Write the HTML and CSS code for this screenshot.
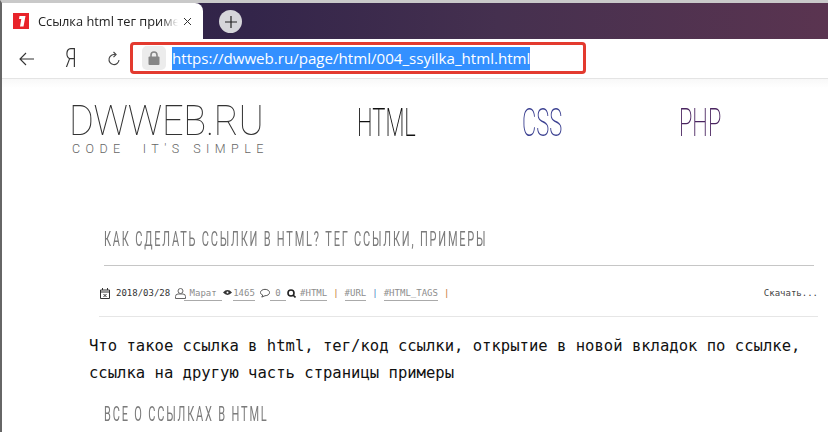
FILE: index.html
```html
<!DOCTYPE html>
<html lang="ru">
<head>
<meta charset="utf-8">
<title>Ссылка html тег примеры</title>
<link rel="stylesheet" href="styles.css">
</head>
<body>
<div class="window">
  <div class="tabbar">
    <div class="tab">
      <svg class="favicon" width="16" height="16" viewBox="0 0 16 16"><rect width="16" height="16" fill="#e8232a"/><path d="M6.500 3h6L10.500 13.500H7L8.300 6H6z" fill="#fff"/></svg>
      <span class="tab-title">Ссылка html тег примеры</span>
      <svg class="tab-close" width="9" height="9" viewBox="0 0 9 9"><path d="M1 1l7 7M8 1l-7 7" stroke="#333" stroke-width="1" fill="none"/></svg>
    </div>
    <div class="new-tab"><svg width="12" height="12" viewBox="0 0 12 12"><path d="M6 0v12M0 6h12" stroke="#222" stroke-width="1.200"/></svg></div>
  </div>
  <div class="toolbar">
    <svg class="ic-back" width="15" height="14" viewBox="0 0 15 14"><path d="M15 7H1M7 1L1 7l6 6" stroke="#333" stroke-width="1.100" fill="none"/></svg>
    <span class="ya">Я</span>
    <svg class="ic-reload" width="14" height="16" viewBox="0 0 14 16"><path d="M8.500 3.800A5 5 0 1 0 12 9" stroke="#444" stroke-width="1.100" fill="none"/><path d="M6.500 1l2.600 2.600L6.500 6.200" stroke="#444" stroke-width="1.100" fill="none"/></svg>
    <div class="address">
      <div class="lock"><svg width="12" height="14" viewBox="0 0 12 14"><path d="M3 6V4a3 3 0 0 1 6 0v2" stroke="#858585" stroke-width="1.600" fill="none"/><rect x="0.500" y="5.500" width="11" height="8.500" rx="1" fill="#858585"/></svg></div>
      <span class="url">https://dwweb.ru/page/html/004_ssyilka_html.html</span>
    </div>
  </div>
  <main class="page">
    <header class="site-head">
      <div class="logo">
        <div class="logo-main">DWWEB.RU</div>
        <div class="logo-sub">CODE&nbsp; IT'S SIMPLE</div>
      </div>
      <nav class="nav">
        <a class="nav-html">HTML</a>
        <a class="nav-css">CSS</a>
        <a class="nav-php">PHP</a>
      </nav>
    </header>
    <article class="article">
      <h1 class="title"><span>КАК СДЕЛАТЬ ССЫЛКИ В HTML? ТЕГ ССЫЛКИ, ПРИМЕРЫ</span></h1>
      <div class="meta">
        <svg class="m-ic" width="10" height="11" viewBox="0 0 10 11"><path d="M.5 2h9v8.500h-9zM.5 4h9M2.500 0v2M7.500 0v2" stroke="#333" fill="none"/><path d="M3.500 6l3 3M6.500 6l-3 3" stroke="#333"/></svg>
        <span class="date">2018/03/28</span>
        <svg class="m-user" width="11" height="11" viewBox="0 0 11 11"><circle cx="5.500" cy="3" r="2.500" stroke="#666" fill="none"/><path d="M.5 10.500V8.500a2.500 2.500 0 0 1 2.500-2.500h5a2.500 2.500 0 0 1 2.500 2.500v2z" stroke="#666" fill="none"/></svg>
        <a class="m-link author">&nbsp;Марат&nbsp;</a>
        <svg class="m-eye" width="9" height="7" viewBox="0 0 11 8"><path d="M0 4q5.500-6 11 0q-5.500 6-11 0z" fill="#333"/><circle cx="5.500" cy="4" r="1.200" fill="#fff"/></svg>
        <a class="m-link views">1465</a>
        <svg class="m-bubble" width="10" height="10" viewBox="0 0 11 10"><path d="M5.500 1c2.800 0 5 1.500 5 3.500S8.300 8 5.500 8L2 9.500l1-2.200C1.500 6.700.5 5.700.5 4.500.5 2.500 2.700 1 5.500 1z" stroke="#444" fill="none"/></svg>
        <a class="m-link comments">&nbsp;0&nbsp;</a>
        <svg class="m-search" width="9" height="9" viewBox="0 0 9 9"><circle cx="4" cy="4" r="3" stroke="#222" stroke-width="1.600" fill="none"/><path d="M6 6l2.500 2.500" stroke="#222" stroke-width="1.600"/></svg>
        <a class="m-link tag">#HTML</a><span class="sep">|</span>
        <a class="m-link tag">#URL</a><span class="sep sep-blue">|</span>
        <a class="m-link tag">#HTML_TAGS</a><span class="sep">|</span>
        <span class="download">Скачать...</span>
      </div>
      <p class="lead">Что такое ссылка в html, тег/код ссылки, открытие в новой вкладок по ссылке, ссылка на другую часть страницы примеры</p>
      <h2 class="subtitle"><span>ВСЕ О ССЫЛКАХ В HTML</span></h2>
    </article>
  </main>
</div>
</body>
</html>
```
FILE: styles.css
```css
* { box-sizing: border-box; }
html, body { margin: 0; padding: 0; height: 432px; overflow: hidden; background: #fff; }
.window { width: 828px; height: 432px; overflow: hidden; display: flex; flex-direction: column; border-top: 3px solid #c9c9c9; border-left: 2px solid #666; }

.tabbar { height: 36px; flex: none; display: flex; align-items: flex-start; background: linear-gradient(90deg, #2e2343 0%, #33254a 30%, #45304f 60%, #5a3450 100%); }
.tab { width: 201px; height: 36px; background: #fff; border-radius: 0 8px 0 0; display: flex; align-items: center; padding: 0 0 0 11px; font: 12.800px "Open Sans", "Noto Sans", sans-serif; color: #222; }
.favicon { flex: none; margin-right: 9px; }
.tab-title { width: 140px; overflow: hidden; white-space: nowrap; -webkit-mask-image: linear-gradient(90deg, #000 88%, transparent); mask-image: linear-gradient(90deg, #000 88%, transparent); }
.tab-close { flex: none; margin-left: 5px; }
.new-tab { width: 23px; height: 23px; border-radius: 50%; background: #d6d6da; margin: 7px 0 0 16px; display: flex; align-items: center; justify-content: center; }

.toolbar { height: 40px; flex: none; background: #fff; border-bottom: 1px solid #e4e4e4; display: flex; align-items: center; }
.ic-back { margin-left: 17px; flex: none; }
.ya { font: 300 25px/30px "Roboto", sans-serif; color: #333; margin-left: 31px; width: 11px; display: block; transform: scaleX(.75); transform-origin: left center; }
.ic-reload { margin-left: 31px; flex: none; }
.address { width: 456px; height: 32px; margin-left: 9px; margin-top: -1px; border: 3px solid #e33a2f; border-radius: 4px; display: flex; align-items: center; padding-left: 9px; }
.lock { width: 24px; height: 24px; border-radius: 5px; background: #ececec; display: flex; align-items: center; justify-content: center; flex: none; }
.url { margin-left: 6px; background: #3390ff; color: #fff; font: 15.100px/23px "Open Sans", sans-serif; white-space: nowrap; }

.page { flex: 1; min-height: 0; background: linear-gradient(#f8f8f8, #fff 9px); color: #222; }
.site-head { height: 86px; display: flex; padding: 25px 0 0 67px; }
.logo { width: 288px; flex: none; }
.logo-main { font: 100 42px/34px "Roboto", sans-serif; color: #333; transform: scaleX(.905); transform-origin: left top; white-space: nowrap; letter-spacing: -.3px; }
.logo-sub { font: 300 12.500px/14px "Roboto", sans-serif; letter-spacing: 5.450px; color: #666; margin: 4px 0 0 3px; white-space: nowrap; }
.nav { display: flex; font: 200 38px/36px "Roboto", sans-serif; margin-top: 1px; }
.nav a { display: block; transform: scaleX(.58); transform-origin: left top; white-space: nowrap; }
.nav-html { width: 165px; color: #111; }
.nav-css { width: 157px; color: #3a3f90; }
.nav-php { color: #4a2560; }

.article { padding: 0 10px 0 87px; }
.title { margin: 65px 0 0 15px; height: 36px; border-bottom: 1px solid #c6c6c6; font: 400 20px/18px "Roboto", sans-serif; color: #7b7b7b; letter-spacing: 3.250px; white-space: nowrap; width: 710px; }
.title span, .subtitle span { display: inline-block; transform: scaleX(.55); transform-origin: left top; }
.meta { height: 51px; border-bottom: 1px solid #e6e6e6; margin-left: 10px; padding: 21px 0 0 1px; display: flex; align-items: flex-start; font: 9px/12px "DejaVu Sans Mono", monospace; color: #333; white-space: nowrap; }
.meta svg { flex: none; margin-top: 1px; }
.date { margin-left: 6px; }
.m-user { margin-left: 5px; margin-right: -2px; }
.m-link { color: #8d8d8d; border-bottom: 1px solid #aaa; height: 14px; }
.meta .m-eye { margin: 2px 1px 0 1px; }
.meta .m-bubble { margin-left: 5px; }
.meta .m-search { margin: 2px 4px 0 1px; }
.sep { color: #c4763a; margin: 0 6px; }
.sep-blue { color: #4a80c0; }
.download { margin-left: auto; color: #444; }
.lead { margin: 16px 0 0 0; width: 732px; font: 15.550px/27px "DejaVu Sans Mono", monospace; color: #111; }
.subtitle { margin: 18px 0 0 15px; font: 400 20px/18px "Roboto", sans-serif; color: #7b7b7b; letter-spacing: 3.300px; white-space: nowrap; }
```
